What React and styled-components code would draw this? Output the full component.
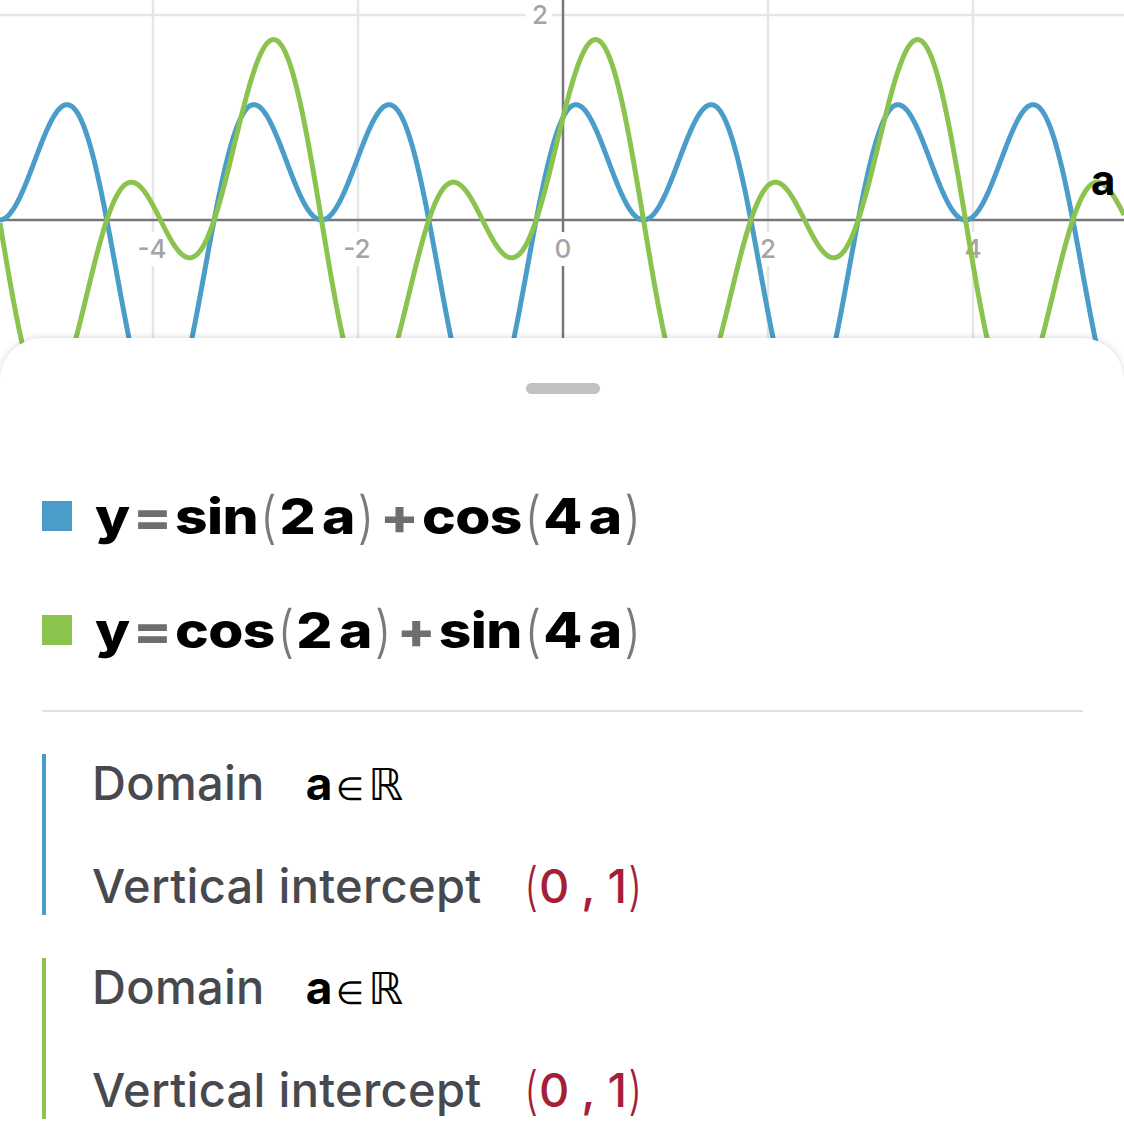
import React from "react";
import styled, { createGlobalStyle } from "styled-components";

const BLUE = "#4a9dc9";
const GREEN = "#8bc34f";
const W = 1124;
const OX = 563;
const OY = 220;
const UNIT = 102.5;

const GlobalStyle = createGlobalStyle`
  html, body {
    margin: 0;
    padding: 0;
    background: #ffffff;
    overflow: hidden;
  }
  body {
    font-family: "Inter", "Roboto", "Liberation Sans", sans-serif;
  }
`;

const curve = (f) => {
  let d = "";
  const n = 1124;
  for (let i = 0; i <= n; i++) {
    const px = (i * W) / n;
    const a = (px - OX) / UNIT;
    const py = OY - UNIT * f(a);
    d += (i ? "L" : "M") + px.toFixed(1) + " " + py.toFixed(1);
  }
  return d;
};

const blueFn = (a) => Math.sin(2 * a) + Math.cos(4 * a);
const greenFn = (a) => Math.cos(2 * a) + Math.sin(4 * a);

const TickLabel = ({ x, y, text, anchor = "middle", bw = 40 }) => (
  <g>
    <rect
      x={anchor === "middle" ? x - bw / 2 : x - bw + 4}
      y={y - 26}
      width={bw}
      height={34}
      fill="#ffffff"
    />
    <text
      x={x}
      y={y}
      textAnchor={anchor}
      fontFamily="Inter, Roboto, sans-serif"
      fontSize="26"
      fontWeight="500"
      fill="#a4a4a4"
    >
      {text}
    </text>
  </g>
);

const Graph = () => {
  const gridX = [-4, -2, 2, 4].map((v) => OX + v * UNIT);
  return (
    <GraphArea>
      <Plot width={W} height={420} viewBox={`0 0 ${W} 420`}>
        {gridX.map((x) => (
          <line key={x} x1={x} y1={0} x2={x} y2={420} stroke="#e6e6e6" strokeWidth="2.5" />
        ))}
        <line x1={0} y1={OY - 2 * UNIT} x2={W} y2={OY - 2 * UNIT} stroke="#e6e6e6" strokeWidth="2.5" />
        <line x1={0} y1={OY} x2={W} y2={OY} stroke="#777777" strokeWidth="2.5" />
        <line x1={OX} y1={0} x2={OX} y2={420} stroke="#777777" strokeWidth="2.5" />

        <TickLabel x={OX - 4 * UNIT - 1} y={258} text="-4" bw={44} />
        <TickLabel x={OX - 2 * UNIT - 1} y={258} text="-2" bw={44} />
        <TickLabel x={OX} y={258} text="0" bw={26} />
        <TickLabel x={OX + 2 * UNIT} y={258} text="2" bw={26} />
        <TickLabel x={OX + 4 * UNIT} y={258} text="4" bw={26} />
        <TickLabel x={548} y={24} text="2" anchor="end" bw={26} />

        <path d={curve(blueFn)} fill="none" stroke={BLUE} strokeWidth="5" strokeLinejoin="round" />
        <path d={curve(greenFn)} fill="none" stroke={GREEN} strokeWidth="5" strokeLinejoin="round" />

        <text
          x={1091}
          y={195}
          fontFamily="Inter, Roboto, sans-serif"
          fontSize="42"
          fontWeight="700"
          fill="#000000"
        >
          a
        </text>
      </Plot>
    </GraphArea>
  );
};

const Equation = ({ color, parts }) => (
  <EqRow>
    <Swatch $color={color} />
    <Eq>
      y<Op>=</Op>
      {parts[0]}
      <Paren>(</Paren>
      {parts[1]}
      <Var>a</Var>
      <Paren>)</Paren>
      <Op>+</Op>
      {parts[2]}
      <Paren>(</Paren>
      {parts[3]}
      <Var>a</Var>
      <Paren>)</Paren>
    </Eq>
  </EqRow>
);

const PropGroup = ({ color }) => (
  <Group $color={color}>
    <PropRow>
      <Label>Domain</Label>
      <Value>
        <b>a</b>
        <Sym>∈</Sym>
        <Reals>ℝ</Reals>
      </Value>
    </PropRow>
    <PropRow>
      <Label>Vertical intercept</Label>
      <Point>
        <RedParen>(</RedParen>0<Comma>,</Comma>1<RedParen>)</RedParen>
      </Point>
    </PropRow>
  </Group>
);

export default function App() {
  return (
    <>
      <GlobalStyle />
      <Page>
        <Graph />
        <Sheet>
          <Handle />
          <Equations>
            <Equation color={BLUE} parts={["sin", "2", "cos", "4"]} />
            <Equation color={GREEN} parts={["cos", "2", "sin", "4"]} />
          </Equations>
          <Divider />
          <Groups>
            <PropGroup color={BLUE} />
            <PropGroup color={GREEN} />
          </Groups>
        </Sheet>
      </Page>
    </>
  );
}

const Page = styled.div`
  width: 1124px;
  height: 1126px;
  overflow: hidden;
  display: flex;
  flex-direction: column;
`;

const GraphArea = styled.div`
  height: 338px;
  flex-shrink: 0;
`;

const Plot = styled.svg`
  display: block;
  overflow: visible;
`;

const Sheet = styled.div`
  position: relative;
  z-index: 1;
  flex: 1;
  background: #ffffff;
  border-radius: 42px 42px 0 0;
  box-shadow: 0 -1px 6px rgba(0, 0, 0, 0.14);
  padding: 45px 41px 0 42px;
  display: flex;
  flex-direction: column;
`;

const Handle = styled.div`
  align-self: center;
  width: 74px;
  height: 11px;
  border-radius: 6px;
  background: #c2c2c2;
`;

const Equations = styled.div`
  margin-top: 82px;
  display: flex;
  flex-direction: column;
  gap: 34px;
`;

const EqRow = styled.div`
  display: flex;
  align-items: center;
  height: 80px;
  gap: 23px;
`;

const Swatch = styled.span`
  width: 30px;
  height: 30px;
  background: ${(p) => p.$color};
  flex-shrink: 0;
`;

const Eq = styled.div`
  font-family: "Inter", "Roboto", sans-serif;
  font-weight: 800;
  font-size: 49px;
  letter-spacing: -0.5px;
  color: #000000;
  display: flex;
  align-items: baseline;
  white-space: pre;
  transform: scaleX(1.16);
  transform-origin: left center;
`;

const Op = styled.span`
  color: #6e6e6e;
  margin: 0 3px;
`;

const Var = styled.span`
  margin-left: 6px;
`;

const Paren = styled.span`
  display: inline-block;
  color: #7a7a7a;
  font-weight: 300;
  transform: scale(0.85, 1.15);
  margin: 0 1px;
`;

const Divider = styled.div`
  margin-top: 40px;
  height: 2px;
  background: #e0e0e0;
`;

const Groups = styled.div`
  margin-top: 42px;
  display: flex;
  flex-direction: column;
  gap: 43px;
`;

const Group = styled.div`
  border-left: 4px solid ${(p) => p.$color};
  padding-left: 46px;
  display: flex;
  flex-direction: column;
  gap: 45px;
`;

const PropRow = styled.div`
  display: flex;
  align-items: baseline;
  gap: 41px;
  height: 58px;
  line-height: 58px;
`;

const Label = styled.span`
  font-family: "Inter", "Roboto", sans-serif;
  font-size: 47px;
  letter-spacing: 0.3px;
  font-weight: 500;
  color: #48494f;
`;

const Value = styled.span`
  font-family: "Inter", "Roboto", sans-serif;
  font-size: 46px;
  color: #000000;
  b {
    font-weight: 700;
  }
`;

const Sym = styled.span`
  font-family: "DejaVu Sans", sans-serif;
  font-weight: 300;
  font-size: 32px;
  margin: 0 4px;
`;

const Reals = styled.span`
  font-family: "DejaVu Sans", sans-serif;
  font-size: 44px;
`;

const Point = styled.span`
  font-family: "Inter", "Roboto", sans-serif;
  font-size: 47px;
  font-weight: 500;
  color: #a51f39;
`;

const RedParen = styled.span`
  display: inline-block;
  font-weight: 300;
  transform: scale(0.85, 1.1);
`;

const Comma = styled.span`
  margin: 0 12px;
`;
